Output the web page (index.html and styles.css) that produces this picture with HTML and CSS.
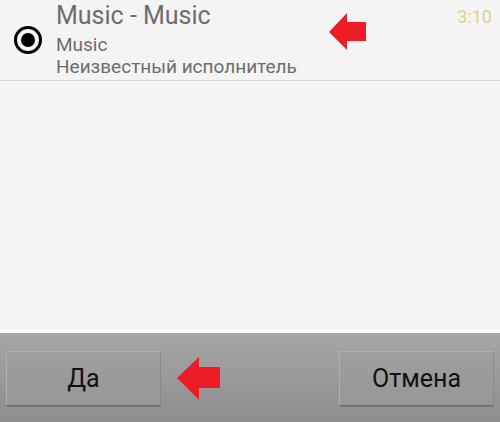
FILE: index.html
```html
<!DOCTYPE html>
<html lang="ru">

<head>
  <meta charset="UTF-8">
  <meta name="viewport" content="width=device-width, initial-scale=1.0">
  <title>Выбор мелодии</title>
  <link rel="stylesheet" href="styles.css">
</head>

<body>
  <div class="screen">
    <div class="list">
      <div class="track">
        <div class="radio"><span class="dot"></span></div>
        <div class="info">
          <div class="title">Music - Music</div>
          <div class="album">Music</div>
          <div class="artist">Неизвестный исполнитель</div>
        </div>
        <div class="duration">3:10</div>

        <svg class="arrow arrow-top" width="38" height="38" viewBox="0 0 38 38">
          <polygon points="0,19 18,0 18,9 37,9 37,28 18,28 18,37" fill="#ee1c25" />
        </svg>
      </div>
    </div>

    <div class="buttonbar">
      <button class="btn" type="button">Да</button>
      <svg class="arrow arrow-bottom" width="44" height="44" viewBox="0 0 44 44">
        <polygon points="0,21 22,0 22,10 43,10 43,31 22,31 22,43" fill="#ee1c25" />
      </svg>
      <button class="btn" type="button">Отмена</button>
    </div>
  </div>
</body>

</html>
```

FILE: styles.css
```css
html,
body {
  margin: 0;
  padding: 0;
}

body {
  font-family: Roboto, "Noto Sans", sans-serif;
  background-color: #f4f4f4;
}

.screen {
  width: 500px;
  height: 422px;
  display: flex;
  flex-direction: column;
}

.list {
  flex: 1;
  background-color: #f4f4f4;
  border-bottom: 3px solid #fbfbfb;
}

.track {
  position: relative;
  display: flex;
  align-items: flex-start;
  height: 80px;
  border-bottom: 1px solid #d8d8d8;
}

.radio {
  width: 22px;
  height: 22px;
  margin: 26px 0 0 14px;
  border: 3px solid #000;
  border-radius: 50%;
  display: flex;
  align-items: center;
  justify-content: center;
  flex-shrink: 0;
}

.dot {
  width: 14px;
  height: 14px;
  border-radius: 50%;
  background-color: #000;
}

.info {
  flex: 1;
  margin-left: 14px;
  color: #6d6d6d;
}

.title {
  font-size: 25px;
  line-height: 30px;
  margin-top: 1px;
}

.album {
  font-size: 19px;
  line-height: 22px;
  margin-top: 3px;
}

.artist {
  font-size: 19px;
  line-height: 22px;
}

.duration {
  color: #e4cf8b;
  font-size: 18px;
  margin: 6px 8px 0 0;
}

.arrow {
  position: absolute;
}

.arrow-top {
  left: 329px;
  top: 13px;
}

.buttonbar {
  position: relative;
  height: 89px;
  background: linear-gradient(#a6a6a6, #8e8e8e);
  display: flex;
  justify-content: space-between;
  align-items: flex-start;
  padding: 18px 6px 0 6px;
  box-sizing: border-box;
}

.btn {
  width: 155px;
  height: 55px;
  background: linear-gradient(#9e9e9e, #979797);
  border: 1px solid #b0b0b0;
  border-bottom-color: #6a6a6a;
  border-right-color: #8a8a8a;
  box-shadow: 0 1px 0 #7a7a7a;
  border-radius: 2px;
  color: #111;
  font-family: Roboto, sans-serif;
  font-size: 25px;
  padding: 0;
}

.arrow-bottom {
  left: 177px;
  top: 24px;
}
```
